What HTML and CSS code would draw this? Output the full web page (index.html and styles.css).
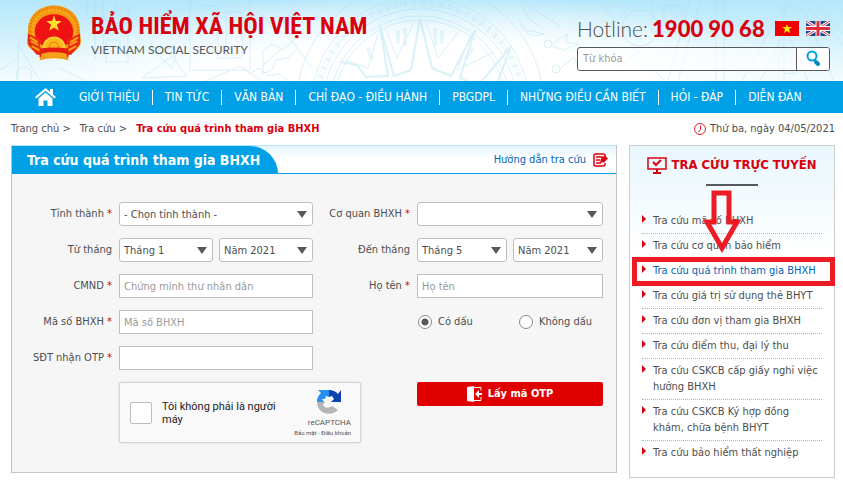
FILE: index.html
```html
<!DOCTYPE html>
<html lang="vi">
<head>
    <meta charset="utf-8" />
    <meta name="viewport" content="width=device-width, initial-scale=1" />
    <title>Tra cứu quá trình tham gia BHXH</title>
    <link rel="stylesheet" href="styles.css">
</head>
<body>
    <header class="header">
        <svg class="header-pattern" viewBox="0 0 843 81" preserveAspectRatio="xMidYMin slice" aria-hidden="true">
            <g fill="none" stroke="#a5def0" stroke-width="1">
                <!-- bronze drum -->
                <circle cx="420" cy="106" r="86" />
                <circle cx="420" cy="106" r="90" />
                <circle cx="420" cy="106" r="97" />
                <circle cx="420" cy="106" r="109" />
                <circle cx="420" cy="106" r="124" />
                <circle cx="420" cy="106" r="103" stroke-width="6" stroke-dasharray="4 2 1 2" opacity=".6" />
                <path d="M340 62l17 3 9 12 22-1-8-50 14 50 17-6 9-52 12 50 19 8 24-46-15 48 18 8 33-40-16 44" stroke-width="2" />
                <path d="M385 28l12 30 17-36M426 22l12 36 22-28M471 34l-14 36 37-18M378 34l-10 34-22-8" />
                <path d="M398 30v14M405 28v18M435 28v18M442 30v14M473 48l-8 12M368 48l4 12" stroke-width="4" opacity=".6" />
                <!-- left motifs -->
                <path d="M18 81V44l22 37M0 70l18-12M36 20l-12 18M95 0v60M103 0v54M87 0v18h28v-18M128 6v56h-22V40h14v14M60 68l26 13M142 78l30-22 14 20zM150 48h28l-6 20zM202 6h16v52h24V12h-16v38M190 0v70h60V0M256 10l22 20 18-24M262 66l30-26 20 28M290 2h36M206 81l34-15 22 15" />
                <circle cx="24" cy="75" r="8" />
                <path d="M262 52l10-8 12 6 8-8 6 6-10 10-12 2-4 10-10 4 2-10zM248 74l12-6 8 8 12-2 8 7" />
                <!-- right motifs -->
                <path d="M520 2l8 16 14 10M524 0l14 12 22 14M520 24c4 10 14 14 24 10M518 18l8 12 18 4M552 44a4 4 0 1 0-8 0 4 4 0 0 0 8 0M552 44l16-10-2 8 12 2-14 6-12-4M560 69a4 4 0 1 0-8 0 4 4 0 0 0 8 0M560 69l14-12 4 10M600 0l16 22 20-22M620 70l18-20 26 31M652 0v32h30V6h-18v18M690 0l-22 81M700 0l-22 81M716 0v81M724 0v81M742 81l42-76 20 5 30 71M760 81l26-52 22 52M784 5v76M802 0l41 45M812 0l31 34" />
                <circle cx="640" cy="28" r="18" />
                <circle cx="790" cy="62" r="12" />
            </g>
        </svg>
        <div class="brand">
            <svg class="emblem" viewBox="0 0 56 58" role="img" aria-label="Quốc huy Việt Nam">
                <path d="M28 0C12 0 1 11 1 26c0 5-1 8-1 11 0 6 4 8 8 11 3 2 5 3 6 4l-1 5c9-3 21-3 30 0l-1-5c4-2 14-7 14-15 0-3-1-6-1-11C55 11 44 0 28 0z" fill="#f49b12" />
                <ellipse cx="28" cy="25" rx="25" ry="23" fill="none" stroke="#dd6a0c" stroke-width="2" stroke-dasharray="1 2" />
                <ellipse cx="28" cy="25" rx="22" ry="20" fill="none" stroke="#ffc42a" stroke-width="1" stroke-dasharray="2 2" />
                <ellipse cx="28" cy="27" rx="20" ry="18" fill="#f01212" />
                <path d="M1 29l14 7-2 7 8 8H10L1 40zM55 29l-14 7 2 7-8 8h11l9-11z" fill="#e92a12" />
                <path d="M3 33l8 5M53 33l-8 5M5 42l9 5M51 42l-9 5M4 37l8 4M52 37l-8 4" stroke="#f9a31a" stroke-width="2" />
                <path d="M28 10l2 6h6l-5 4 2 6-5-3-5 3 2-6-5-4h6z" fill="#ffe02e" />
                <path d="M17 44a11 11 0 0 1 22 0z" fill="#ffb51c" stroke="#ffd02e" stroke-width="2" />
                <circle cx="28" cy="43" r="5" fill="none" stroke="#e8780a" stroke-width="1" />
                <path d="M13 45c8-2 22-2 30 0l0 9c-9-3-21-3-30 0z" fill="#e31c12" />
                <path d="M15 50c8-2 18-2 26 0l1 5c-9-3-19-3-28 0z" fill="#f8a21b" />
            </svg>
            <div>
                <h1 class="brand-name">BẢO HIỂM XÃ HỘI VIỆT NAM</h1>
                <p class="brand-sub">VIETNAM SOCIAL SECURITY</p>
            </div>
        </div>
        <div class="header-tools">
            <div class="hotline">
                <span class="hotline-label">Hotline:</span>
                <strong class="hotline-number">1900 90 68</strong>
                <a class="flag" href="#vi" aria-label="Tiếng Việt">
                    <svg viewBox="0 0 24 15"><path fill="#f00000" d="M0 0h24v15H0z" /><path fill="#fff000" d="M12 3l1 3h4l-3 2 1 4-3-2-3 2 1-4-3-2h4z" /></svg>
                </a>
                <a class="flag" href="#en" aria-label="English">
                    <svg viewBox="0 0 24 15"><path fill="#23408f" d="M0 0h24v15H0z" /><path stroke="#fff" stroke-width="3" d="M0 0l24 15M24 0L0 15" /><path stroke="#e0303c" stroke-width="1" d="M0 0l24 15M24 0L0 15" /><path stroke="#fff" stroke-width="5" d="M12 0v15M0 7.500h24" /><path stroke="#e0303c" stroke-width="3" d="M12 0v15M0 7.500h24" /></svg>
                </a>
            </div>
            <form class="search">
                <input type="text" placeholder="Từ khóa" aria-label="Từ khóa">
                <button type="button" aria-label="Tìm kiếm">
                    <svg width="16" height="18" viewBox="0 0 16 18"><circle cx="7" cy="6" r="4.500" fill="none" stroke="#00a0dc" stroke-width="2" /><path d="M10 10l1 1" stroke="#00a0dc" stroke-width="2" /><path d="M11 12l2 2" stroke="#0089c4" stroke-width="4" stroke-linecap="round" /></svg>
                </button>
            </form>
        </div>
    </header>

    <nav class="nav">
        <a class="nav-home" href="#" aria-label="Trang chủ">
            <svg width="21" height="18" viewBox="0 0 21 18"><path fill="#fff" d="M10.500 0L0 9l1.500 1.600 9-7.800 9 7.800L21 9l-3-2.600V1h-3v2.800zM10.500 4.500L3.500 10.500V18h5v-5.500h4V18h5v-7.500z" /></svg>
        </a>
        <a href="#">GIỚI THIỆU</a>
        <a href="#">TIN TỨC</a>
        <a href="#">VĂN BẢN</a>
        <a href="#">CHỈ ĐẠO - ĐIỀU HÀNH</a>
        <a href="#">PBGDPL</a>
        <a href="#">NHỮNG ĐIỀU CẦN BIẾT</a>
        <a href="#">HỎI - ĐÁP</a>
        <a href="#">DIỄN ĐÀN</a>
    </nav>

    <div class="crumb-bar">
        <div class="crumbs">
            <a href="#">Trang chủ</a> <span>&gt;</span>
            <a href="#">Tra cứu</a> <span>&gt;</span>
            <strong>Tra cứu quá trình tham gia BHXH</strong>
        </div>
        <div class="date">
            <svg width="12" height="12" viewBox="0 0 12 12" fill="none" stroke="#d8232f" stroke-width="1"><circle cx="6" cy="6" r="5.500" /><path d="M6.500 2.500v4l-2 2.500" /></svg>
            Thứ ba, ngày 04/05/2021
        </div>
    </div>

    <div class="content">
        <main class="panel">
            <div class="panel-head">
                <h2 class="panel-title">Tra cứu quá trình tham gia BHXH</h2>
                <a class="guide" href="#">
                    Hướng dẫn tra cứu
                    <svg width="15" height="14" viewBox="0 0 15 14"><path d="M12 4V2.500Q12 1 10.500 1H2.500Q1 1 1 2.500v9Q1 13 2.500 13h8q1.500 0 1.500-1.500V10" fill="none" stroke="#d9000d" stroke-width="1.500" /><path d="M3 4h7M3 7h4M3 10h5" stroke="#d9000d" stroke-width="1.500" /><path d="M7 9.500l1-4 4-3 3 3-4 4z" fill="#d9000d" /></svg>
                </a>
            </div>
            <form class="form">
                <label for="province">Tỉnh thành <b>*</b></label>
                <select id="province"><option>- Chọn tỉnh thành -</option></select>
                <label for="office">Cơ quan BHXH <b>*</b></label>
                <select id="office"><option></option></select>

                <label for="from-month">Từ tháng</label>
                <div class="pair">
                    <select id="from-month"><option>Tháng 1</option></select>
                    <select aria-label="Từ năm"><option>Năm 2021</option></select>
                </div>
                <label for="to-month">Đến tháng</label>
                <div class="pair">
                    <select id="to-month"><option>Tháng 5</option></select>
                    <select aria-label="Đến năm"><option>Năm 2021</option></select>
                </div>

                <label for="id-card">CMND <b>*</b></label>
                <input id="id-card" type="text" placeholder="Chứng minh thư nhân dân">
                <label for="full-name">Họ tên <b>*</b></label>
                <input id="full-name" type="text" placeholder="Họ tên">

                <label for="bhxh-code">Mã số BHXH <b>*</b></label>
                <input id="bhxh-code" type="text" placeholder="Mã số BHXH">
                <div class="radios">
                    <label><input type="radio" name="accent" checked> Có dấu</label>
                    <label><input type="radio" name="accent"> Không dấu</label>
                </div>

                <label class="first" for="phone">SĐT nhận OTP <b>*</b></label>
                <input id="phone" type="tel">

                <div class="captcha">
                    <input id="robot" type="checkbox">
                    <label for="robot">Tôi không phải là người máy</label>
                    <div class="captcha-brand">
                        <svg width="26" height="26" viewBox="0 0 26 26">
                            <path d="M1 13C1 9 2 7 5 4L2 1h11v7l-3-1-1 3-3 0 2 3z" fill="#2b8ff0" />
                            <path d="M13 1c4 0 6 1 9 4l3-4v12H15l3-3-2-3-3 1z" fill="#0c42ad" />
                            <path d="M1 13h8l-2 3c3 4 6 3 9 1l6 4C15 28 1 25 1 13z" fill="#b5b6b8" />
                        </svg>
                        <span class="captcha-name">reCAPTCHA</span>
                        <span class="captcha-terms">Bảo mật - Điều khoản</span>
                    </div>
                </div>
                <button class="submit" type="button">
                    <svg width="15" height="16" viewBox="0 0 15 16"><path d="M0 1l7-1v16l-7-1z" fill="#fff" /><path d="M7 1.500h7v3M14 11v3.500H7" fill="none" stroke="#fff" stroke-width="1" /><path d="M8 8l4-4v3h3v2h-3v3z" fill="#fff" /></svg>
                    Lấy mã OTP
                </button>
            </form>
        </main>

        <aside class="sidebar">
            <h2 class="sidebar-title">
                <svg width="20" height="17" viewBox="0 0 20 17"><path d="M1 1h18v11H1z" fill="none" stroke="#d9000d" stroke-width="1.500" /><path d="M10 12v3M6 16h8" stroke="#d9000d" stroke-width="2" /><path d="M6 5l3 3 5-5" fill="none" stroke="#d9000d" stroke-width="2" /></svg>
                TRA CỨU TRỰC TUYẾN
            </h2>
            <ul class="links">
                <li><a href="#">Tra cứu mã số BHXH</a></li>
                <li><a href="#">Tra cứu cơ quan bảo hiểm</a></li>
                <li class="active">
                    <a href="#">Tra cứu quá trình tham gia BHXH</a>
                    <svg class="arrow" width="42" height="64" viewBox="0 0 42 64"><path d="M13 3h15v29h8L21 58 6 32h7z" fill="none" stroke="#ed1c24" stroke-width="5" /></svg>
                </li>
                <li><a href="#">Tra cứu giá trị sử dụng thẻ BHYT</a></li>
                <li><a href="#">Tra cứu đơn vị tham gia BHXH</a></li>
                <li><a href="#">Tra cứu điểm thu, đại lý thu</a></li>
                <li><a href="#">Tra cứu CSKCB cấp giấy nghỉ việc hưởng BHXH</a></li>
                <li><a href="#">Tra cứu CSKCB Ký hợp đồng khám, chữa bệnh BHYT</a></li>
                <li><a href="#">Tra cứu bảo hiểm thất nghiệp</a></li>
            </ul>
        </aside>
    </div>
</body>
</html>
```
FILE: styles.css
```css
* {
    margin: 0;
    padding: 0;
    box-sizing: border-box;
}

body {
    font-family: Tahoma, "DejaVu Sans Condensed", "Noto Sans", sans-serif;
    font-size: 11px;
    line-height: 16px;
    color: #4d4d4f;
    background: #fff;
}

a {
    color: inherit;
    text-decoration: none;
}

svg {
    flex: none;
}

input,
select,
button {
    font: inherit;
    color: inherit;
}

/* header */
.header {
    position: relative;
    display: flex;
    justify-content: space-between;
    height: 81px;
    padding: 5px 13px 0 27px;
    background: radial-gradient(ellipse at 50% 100%, #fff 35%, rgba(255, 255, 255, 0) 75%), linear-gradient(#b5e7fa, #f2fbfe);
    overflow: hidden;
}

.header-pattern {
    position: absolute;
    inset: 0;
    width: 100%;
    height: 100%;
    opacity: 0.4;
}

.brand,
.header-tools {
    position: relative;
}

.brand {
    display: flex;
    gap: 10px;
}

.emblem {
    width: 54px;
    height: 57px;
}

.brand-name {
    padding-top: 5px;
    font-family: "Liberation Sans Narrow", "Roboto Condensed", Roboto, sans-serif;
    font-size: 24px;
    line-height: 32px;
    color: #d9000d;
    white-space: nowrap;
}

.brand-sub {
    font-family: Lato, sans-serif;
    font-size: 12px;
    line-height: 16px;
    color: #58595b;
}

.header-tools {
    width: 253px;
    padding-top: 10px;
}

.hotline {
    display: flex;
    align-items: center;
    gap: 4px;
    height: 27px;
    font-family: Lato, sans-serif;
    font-size: 21px;
    white-space: nowrap;
}

.hotline-label {
    font-weight: 300;
}

.hotline-number {
    font-size: 22px;
    font-weight: 900;
    color: #d9000d;
    margin-right: auto;
}

.flag {
    width: 24px;
    height: 15px;
    display: flex;
}

.flag + .flag {
    margin-left: 3px;
}

.search {
    display: flex;
    height: 24px;
    margin-top: 5px;
    border: 1px solid #58595b;
    border-radius: 3px;
    background: rgba(255, 255, 255, 0.6);
    overflow: hidden;
}

.search input {
    flex: 1;
    min-width: 0;
    padding: 0 5px;
    border: 0;
    background: none;
}

.search button {
    width: 33px;
    border: 0;
    border-left: 1px solid #58595b;
    background: #fff;
    display: flex;
    align-items: center;
    justify-content: center;
}

::placeholder {
    color: #9a9a9a;
    opacity: 1;
}

/* navigation */
.nav {
    display: flex;
    align-items: center;
    height: 32px;
    padding-left: 35px;
    background: #00a0e6;
    color: #fff;
    font-size: 12px;
    line-height: 15px;
    white-space: nowrap;
}

.nav a {
    padding: 0 12px;
}

.nav .nav-home {
    display: flex;
    padding: 0 11px 0 0;
}

.nav a + a + a {
    border-left: 1px solid #fff;
}

/* breadcrumb */
.crumb-bar {
    display: flex;
    align-items: center;
    justify-content: space-between;
    height: 32px;
    padding: 0 8px 0 11px;
    white-space: nowrap;
}

.crumbs span {
    margin-right: 6px;
}

.crumbs strong {
    color: #d9000d;
}

.date {
    display: flex;
    align-items: center;
    gap: 4px;
}

/* content */
.content {
    display: flex;
    align-items: flex-start;
    gap: 12px;
    padding: 0 8px 7px 11px;
}

.panel {
    flex: 1;
    border: 1px solid #c4c4c4;
    border-top-color: #b5e7fa;
    background: #f6f6f6;
}

.panel-head {
    display: flex;
    align-items: center;
    justify-content: space-between;
    height: 28px;
    padding-right: 8px;
    border-bottom: 1px solid #00a0e6;
    background: linear-gradient(#e4f6fd, #fff 50%);
}

.panel-title {
    padding: 0 18px 0 15px;
    border-radius: 0 28px 0 0;
    background: #00a0e6;
    color: #fff;
    font-size: 14px;
    line-height: 28px;
    white-space: nowrap;
}

.guide {
    display: flex;
    align-items: center;
    gap: 7px;
    color: #0066b3;
}

.form {
    display: grid;
    grid-template-columns: 100px 194fr 90px 186fr;
    grid-auto-rows: minmax(24px, auto);
    gap: 12px 7px;
    padding: 28px 13px 29px 0;
}

.form > label {
    line-height: 23px;
    text-align: right;
    white-space: nowrap;
}

.form > label.first {
    grid-column: 1;
}

.form b {
    color: #d9000d;
    font-weight: normal;
}

.form select,
.form input[type="text"],
.form input[type="tel"] {
    width: 100%;
    min-width: 0;
    height: 24px;
    padding: 1px 4px 0;
    border: 1px solid #bfbfbf;
    background-color: #fff;
}

.form select {
    appearance: none;
    border-radius: 3px;
    background-image: url("data:image/svg+xml,%3Csvg xmlns='http://www.w3.org/2000/svg' width='10' height='7'%3E%3Cpath d='M0 0h10L5 7z' fill='%2358595b'/%3E%3C/svg%3E");
    background-repeat: no-repeat;
    background-position: right 5px center;
}

.pair {
    display: grid;
    grid-template-columns: 1fr 1fr;
    gap: 6px;
}

.radios {
    grid-column: 4;
    display: grid;
    grid-template-columns: 101px 1fr;
    align-items: center;
    white-space: nowrap;
}

.radios label {
    display: flex;
    align-items: center;
    gap: 6px;
}

.radios input {
    appearance: none;
    width: 14px;
    height: 14px;
    margin-left: 1px;
    border: 1px solid #8a8a8a;
    border-radius: 50%;
    background: #fff;
}

.radios input:checked {
    background: radial-gradient(circle, #58595b 3px, #fff 4px);
}

.captcha {
    grid-column: 2 / 4;
    display: flex;
    align-items: center;
    width: 242px;
    height: 61px;
    padding: 0 9px 0 10px;
    border: 1px solid #d3d3d3;
    border-radius: 2px;
    background: #f9f9f9;
    box-shadow: 0 0 3px rgba(0, 0, 0, 0.1);
    font-family: Roboto, sans-serif;
    line-height: 13px;
    color: #222;
}

.captcha input {
    appearance: none;
    flex: none;
    width: 22px;
    height: 22px;
    margin-right: 10px;
    border: 1px solid #bdbdbd;
    border-radius: 2px;
    background: #fff;
}

.captcha label {
    flex: 1;
}

.captcha-brand {
    display: flex;
    flex-direction: column;
    align-items: flex-end;
    color: #555;
    white-space: nowrap;
}

.captcha-brand svg {
    margin-right: 9px;
}

.captcha-name {
    font-size: 8px;
    line-height: 15px;
}

.captcha-terms {
    font-size: 6px;
    line-height: 6px;
}

.submit {
    grid-column: 4;
    display: flex;
    align-items: center;
    justify-content: center;
    gap: 6px;
    height: 24px;
    border: 0;
    border-radius: 2px;
    background: #e00000;
    color: #fff;
    font-weight: bold;
}

/* sidebar */
.sidebar {
    flex: 0 0 206px;
    padding: 9px 12px 12px;
    border: 1px solid #c9cdd0;
    background: linear-gradient(#e9f7fd, #fff 110px);
}

.sidebar-title {
    display: flex;
    align-items: center;
    justify-content: center;
    gap: 4px;
    color: #d9000d;
    font-size: 13px;
    line-height: 20px;
    white-space: nowrap;
}

.links {
    list-style: none;
}

.links::before {
    content: "";
    display: block;
    width: 52px;
    height: 2px;
    margin: 9px auto 23px;
    background: #58595b;
}

.links li {
    position: relative;
    padding: 4px 0 4px 11px;
    border-bottom: 1px dotted #b5b5b5;
}

.links li:last-child {
    border-bottom: 0;
}

.links li::before {
    content: "";
    position: absolute;
    left: 0;
    top: 6px;
    border: 4px solid transparent;
    border-left-color: #d9000d;
    border-right: 0;
}

.links .active {
    color: #0066b3;
    white-space: nowrap;
}

.links .active::after {
    content: "";
    position: absolute;
    inset: -2px -13px -3px -10px;
    border: 5px solid #ed1c24;
}

.arrow {
    position: absolute;
    left: 59px;
    top: -69px;
    z-index: 1;
}
```
